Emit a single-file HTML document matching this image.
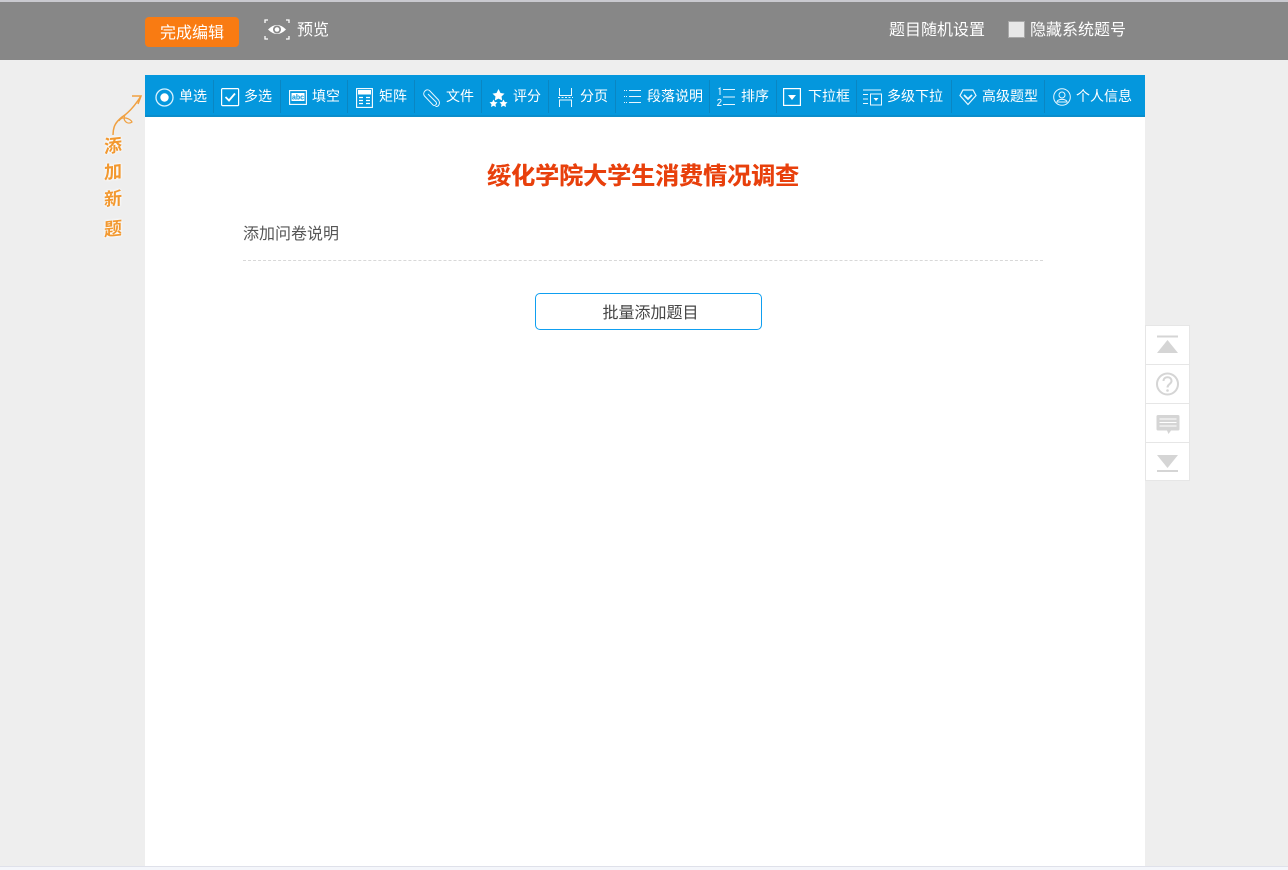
<!DOCTYPE html>
<html lang="zh"><head><meta charset="utf-8"><title>编辑问卷</title>
<style>
html,body{margin:0;padding:0;width:1288px;height:870px;overflow:hidden;background:#eee;font-family:"Liberation Sans","Noto Sans CJK SC",sans-serif;}
.a{position:absolute;white-space:nowrap;line-height:20px;}
#top{position:absolute;left:0;top:0;width:1288px;height:60px;background:#878787;border-top:2px solid #c9c9cf;box-sizing:border-box;}
#bar{position:absolute;left:145px;top:75px;width:1000px;height:42px;background:#0497dd;border-bottom:2px solid #0a8dcb;box-sizing:border-box;}
.t{position:absolute;top:86px;color:#fff;font-size:14px;line-height:20px;white-space:nowrap;}
.s{position:absolute;top:80px;width:1px;height:33px;background:#0a86c2;}
svg{position:absolute;overflow:visible;}
#side div{position:absolute;left:1145px;width:45px;box-sizing:border-box;background:#fff;border:1px solid #e6e6e6;}
.x{position:absolute;left:101px;width:24px;text-align:center;font-family:'Noto Sans CJK SC',sans-serif;font-size:18px;font-weight:700;color:#f2982f;line-height:24px;transform:skewY(-6deg);text-shadow:0 0 2px #fff,0 0 3px #fff;}
</style></head><body>
<div id="top"></div>
<div class="a" style="left:145px;top:17px;width:94px;height:30px;background:#f97b12;border-radius:4px;color:#fff;font-size:16px;line-height:31px;text-align:center;padding-top:1px;box-sizing:border-box;">完成编辑</div>
<svg style="left:264px;top:19px" width="26" height="21" viewBox="0 0 26 21" fill="none" stroke="#fff" stroke-width="1.300"><path d="M1 4V1H4M22 1H25V4M1 17V20H4M22 20H25V17"/><path d="M4 10.500Q13 1.500 22 10.500Q13 19.500 4 10.500Z" fill="#fff" stroke="none"/><circle cx="13" cy="10.500" r="4" fill="#878787" stroke="none"/><circle cx="13" cy="10.500" r="2.300" fill="#fff" stroke="none"/></svg>
<div class="a" style="left:297px;top:21px;color:#fff;font-size:16px;">预览</div>
<div class="a" style="left:889px;top:21px;color:#fff;font-size:16px;">题目随机设置</div>
<div class="a" style="left:1008px;top:21px;width:17px;height:17px;background:#e8e8e8;border:1px solid #a8a8a8;box-sizing:border-box;"></div>
<div class="a" style="left:1030px;top:21px;color:#fff;font-size:16px;">隐藏系统题号</div>

<div style="position:absolute;left:145px;top:117px;width:1000px;height:749px;background:#fff;"></div>
<div style="position:absolute;left:0;top:866px;width:1288px;height:4px;background:#f4f6fb;border-top:1px solid #dfe1ea;box-sizing:border-box;"></div>
<div id="bar"></div>

<div class="s" style="left:213px"></div><div class="s" style="left:280px"></div><div class="s" style="left:347px"></div><div class="s" style="left:414px"></div><div class="s" style="left:481px"></div><div class="s" style="left:548px"></div><div class="s" style="left:615px"></div><div class="s" style="left:709px"></div><div class="s" style="left:776px"></div><div class="s" style="left:856px"></div><div class="s" style="left:951px"></div><div class="s" style="left:1044px"></div>

<svg style="left:155px;top:88px" width="20" height="20" viewBox="0 0 20 20"><circle cx="9.500" cy="9.500" r="8.500" fill="none" stroke="#d8f2ff" stroke-width="1.300"/><circle cx="9.500" cy="9.500" r="4.200" fill="#fff"/></svg>
<div class="t" style="left:179px">单选</div>
<svg style="left:221px;top:88px" width="18" height="18" viewBox="0 0 18 18" fill="none" stroke="#fff"><rect x=".6" y=".6" width="17" height="17" rx="1" stroke-width="1.200"/><path d="M4.500 9L8 12.500L14 5.500" stroke-width="1.800"/></svg>
<div class="t" style="left:244px">多选</div>
<svg style="left:289px;top:90px" width="18" height="15" viewBox="0 0 18 15"><rect x=".6" y=".6" width="16.800" height="13.800" fill="none" stroke="#fff" stroke-width="1.100"/><rect x="2.500" y="3" width="13" height="8" fill="#fff"/><text x="9" y="9.500" text-anchor="middle" font-size="7" font-weight="700" fill="#0497dd" font-family="Liberation Sans">abc</text></svg>
<div class="t" style="left:312px">填空</div>
<svg style="left:356px;top:88px" width="17" height="20" viewBox="0 0 17 20" fill="none" stroke="#fff"><rect x=".6" y=".6" width="15.800" height="18.800" stroke-width="1.100"/><rect x="2" y="2" width="13" height="4.500" fill="#fff" stroke="none"/><path d="M3 9.500H7M10 9.500H14M3 12.500H7M10 12.500H14M3 15.500H7M10 15.500H14" stroke-width="1.200"/></svg>
<div class="t" style="left:379px">矩阵</div>
<svg style="left:422px;top:88px" width="19" height="20" viewBox="0 0 19 20" fill="none" stroke="#e8f7ff" stroke-width="1"><path d="M6 6L14 14C15.500 16 13 18.500 11 17L2.500 8C0 5 4 0 7.500 2.500L16.500 12C18.500 15 17 19 13.500 18.500"/></svg>
<div class="t" style="left:446px">文件</div>
<svg style="left:489px;top:89px" width="19" height="18" viewBox="0 0 19 18" fill="#fff"><path d="M9.500 0L11.500 4L15.500 4.600L12.500 7.500L13.200 11.500L9.500 9.600L5.800 11.500L6.500 7.500L3.500 4.600L7.500 4Z"/><path d="M4.500 10.500L5.800 13L8.500 13.300L6.500 15.200L7 18L4.500 16.700L2 18L2.500 15.200L.5 13.300L3.200 13Z"/><path d="M14.500 10.500L15.800 13L18.500 13.300L16.500 15.200L17 18L14.500 16.700L12 18L12.500 15.200L10.500 13.300L13.200 13Z"/></svg>
<div class="t" style="left:513px">评分</div>
<svg style="left:558px;top:87px" width="15" height="21" viewBox="0 0 15 21" fill="none" stroke="#e8f7ff" stroke-width="1"><path d="M1.500 1V8.500H13.500V1M1.500 20V13H13.500V20"/><path d="M0 10.500H15" stroke-dasharray="2 1.500"/></svg>
<div class="t" style="left:580px">分页</div>
<svg style="left:624px;top:89px" width="17" height="15" viewBox="0 0 17 15" stroke="#e8f7ff" stroke-width="1"><path d="M5 1.500H17M5 7.500H17M5 13.500H17"/><path d="M0 1.500H3M0 7.500H3M0 13.500H3" stroke-dasharray="1 1"/></svg>
<div class="t" style="left:647px">段落说明</div>
<svg style="left:717px;top:87px" width="18" height="20" viewBox="0 0 18 20" fill="none" stroke="#e8f7ff" stroke-width="1"><path d="M6 2.500H18M6 10H18M6 17.500H18"/><path d="M1.500 2L3 1V8M.5 13.500C1.500 11.500 4.500 12 4 14C3.500 15.500 1 17 .5 18.500H4.500"/></svg>
<div class="t" style="left:741px">排序</div>
<svg style="left:783px;top:88px" width="18" height="18" viewBox="0 0 18 18"><rect x=".6" y=".6" width="16.800" height="16.800" fill="none" stroke="#fff" stroke-width="1.200"/><path d="M5 7H13L9 12Z" fill="#fff"/></svg>
<div class="t" style="left:808px">下拉框</div>
<svg style="left:863px;top:89px" width="19" height="17" viewBox="0 0 19 17" fill="none" stroke="#e8f7ff" stroke-width="1"><path d="M0 1H18M0 5.500H5M0 10H5M0 14.500H5"/><rect x="7.500" y="5" width="11" height="11"/><path d="M10.500 9H15.500L13 12Z" fill="#fff" stroke="none"/></svg>
<div class="t" style="left:887px">多级下拉</div>
<svg style="left:959px;top:88px" width="18" height="18" viewBox="0 0 18 18" fill="none" stroke="#e8f7ff" stroke-width="1.200"><path d="M4 2H14L17 7.500L9 16.500L1 7.500Z"/><path d="M5 7L9 11L13 7" stroke-width="1.700"/></svg>
<div class="t" style="left:982px">高级题型</div>
<svg style="left:1053px;top:88px" width="18" height="18" viewBox="0 0 18 18" fill="none" stroke="#e8f7ff" stroke-width="1"><circle cx="9" cy="9" r="8.300"/><circle cx="9" cy="7" r="3"/><path d="M4 14C4 10.500 14 10.500 14 14Z"/></svg>
<div class="t" style="left:1076px">个人信息</div>

<svg style="left:100px;top:92px" width="45" height="50" viewBox="0 0 45 50" fill="none" stroke="#f0a040" stroke-width="1.500"><path d="M13 43C13 34 16 30 22 25C30 20 36 12 41 4"/><path d="M32 4H41L38 12"/><path d="M19 29C22 23 31 27 32 30C28 33 22 29 25 23" stroke-width="1.200"/></svg>
<div class="x" style="top:133px">添</div>
<div class="x" style="top:159px">加</div>
<div class="x" style="top:186px">新</div>
<div class="x" style="top:216px">题</div>

<div class="a" style="left:487px;top:162px;color:#e8400c;font-size:24px;font-weight:700;line-height:30px;text-shadow:.4px 0 0 #e8400c;">绥化学院大学生消费情况调查</div>
<div class="a" style="left:243px;top:225px;color:#555;font-size:16px;">添加问卷说明</div>
<div style="position:absolute;left:243px;top:260px;width:800px;border-top:1px dashed #d8d8d8;"></div>
<div class="a" style="left:535px;top:293px;width:227px;height:37px;box-sizing:border-box;border:1px solid #0f9ff0;border-radius:5px;color:#444;font-size:16px;line-height:37px;padding-left:4px;padding-top:1px;text-align:center;">批量添加题目</div>

<div id="side">
<div style="top:325px;height:40px"></div><div style="top:364px;height:40px"></div><div style="top:403px;height:40px"></div><div style="top:442px;height:39px"></div>
</div>
<svg style="left:1145px;top:325px" width="45" height="156" viewBox="0 0 45 156"><path d="M12 11.500H33" stroke="#d5d5d5" stroke-width="2"/><path d="M22.500 15L33 28H12Z" fill="#d5d5d5"/><circle cx="22.500" cy="59" r="10.500" fill="none" stroke="#d5d5d5" stroke-width="2"/><path d="M18.500 56C18.500 51 26.500 51 26.500 56C26.500 59 22.500 59 22.500 62.500" fill="none" stroke="#d5d5d5" stroke-width="2"/><circle cx="22.500" cy="65.500" r="1.300" fill="#d5d5d5"/><path d="M13 90H33Q34.500 90 34.500 91.500V104Q34.500 105.500 33 105.500H26L23.500 109L22 105.500H13Q11.500 105.500 11.500 104V91.500Q11.500 90 13 90Z" fill="#d5d5d5"/><path d="M14.500 94H31.500M14.500 97.500H31.500M14.500 101H31.500" stroke="#fff"/><path d="M12 130H33L22.500 143Z" fill="#d5d5d5"/><path d="M12 146H33" stroke="#d5d5d5" stroke-width="2"/></svg>
</body></html>
